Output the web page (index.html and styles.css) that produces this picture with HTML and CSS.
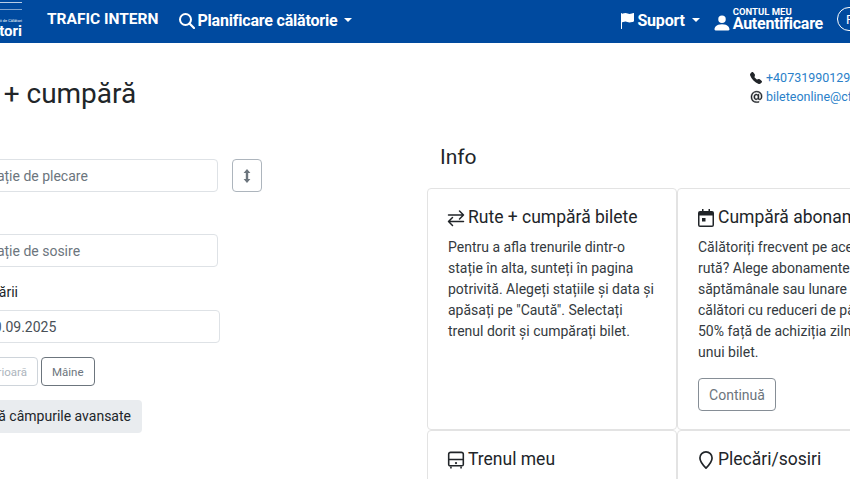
FILE: index.html
```html
<!DOCTYPE html>
<html lang="ro">
<head>
<meta charset="utf-8">
<title>Rute + cumpără</title>
<link rel="stylesheet" href="styles.css">
</head>
<body>
<nav class="nav">
  <div class="logo">
    <span class="logo-lines"></span>
    <span class="logo-small">Informații de Călători</span>
    <span class="logo-big">Călători</span>
  </div>
  <span class="nav-trafic">TRAFIC INTERN</span>
  <span class="nav-item nav-plan">
    <svg viewBox="0 0 16 16" width="16" height="16"><circle cx="6.500" cy="6.500" r="5.500" fill="none" stroke="currentColor" stroke-width="2"/><path d="M10.500 10.500l4.500 4.500" fill="none" stroke="currentColor" stroke-width="2.200" stroke-linecap="round"/></svg>
    Planificare călătorie<span class="caret"></span>
  </span>
  <span class="nav-spacer"></span>
  <span class="nav-item nav-sup">
    <svg viewBox="0 0 16 16" width="16" height="16"><path fill="currentColor" d="M14.778.085A.5.5 0 0 1 15 .5V8a.5.5 0 0 1-.314.464L14.5 8l.186.464-.003.001-.006.003-.023.009a12 12 0 0 1-.397.15c-.264.095-.631.223-1.047.35-.816.252-1.879.523-2.710.523-.847 0-1.548-.28-2.158-.525l-.028-.01C7.680 8.710 7.140 8.500 6.500 8.500c-.7 0-1.638.23-2.437.477A20 20 0 0 0 3 9.342V15.500a.5.5 0 0 1-1 0V.5a.5.5 0 0 1 1 0v.282c.226-.079.496-.17.79-.26C4.606.272 5.670 0 6.500 0c.84 0 1.524.277 2.121.519l.043.018C9.286.788 9.828 1 10.500 1c.7 0 1.638-.23 2.437-.477a20 20 0 0 0 1.349-.476l.019-.007.004-.002h.001"/></svg>
    Suport<span class="caret"></span>
  </span>
  <span class="nav-user">
    <svg class="user-ic" viewBox="0 0 16 16" width="20" height="20"><path fill="currentColor" d="M3 14s-1 0-1-1 1-4 6-4 6 3 6 4-1 1-1 1zm5-6a3 3 0 1 0 0-6 3 3 0 0 0 0 6"/></svg>
    <span class="nav-user-text"><span class="nav-user-top">CONTUL MEU</span><span class="nav-user-main">Autentificare</span></span>
  </span>
  <span class="nav-lang">RO</span>
</nav>
<header class="head">
  <h1 class="title">Rute + cumpără</h1>
  <div class="contact">
    <div class="contact-row">
      <svg viewBox="0 0 16 16" width="12" height="12"><path fill="currentColor" fill-rule="evenodd" d="M1.885.511a1.745 1.745 0 0 1 2.610.163L6.290 2.980c.329.423.445.974.315 1.494l-.547 2.190a.68.68 0 0 0 .178.643l2.457 2.457a.68.68 0 0 0 .644.178l2.189-.547a1.750 1.750 0 0 1 1.494.315l2.306 1.794c.829.645.905 1.870.163 2.611l-1.034 1.034c-.74.74-1.846 1.065-2.877.702a18.600 18.600 0 0 1-7.010-4.420 18.600 18.600 0 0 1-4.420-7.009c-.362-1.030-.037-2.137.703-2.877z"/></svg>
      <a class="contact-link">+40731990129</a>
    </div>
    <div class="contact-row">
      <svg class="at-ic" viewBox="0 0 16 16" width="16" height="16"><path fill="currentColor" stroke="currentColor" stroke-width=".5" d="M13.106 7.222c0-2.967-2.249-5.032-5.482-5.032-3.350 0-5.646 2.318-5.646 5.702 0 3.493 2.235 5.708 5.762 5.708.862 0 1.689-.123 2.304-.335v-.862c-.43.199-1.354.328-2.290.328-2.926 0-4.813-1.880-4.813-4.798 0-2.844 1.921-4.881 4.594-4.881 2.735 0 4.608 1.688 4.608 4.156 0 1.682-.554 2.769-1.416 2.769-.492 0-.772-.28-.772-.76V5.206H8.923v.834h-.11c-.266-.595-.881-.964-1.600-.964-1.400 0-2.378 1.162-2.378 2.823 0 1.737.957 2.906 2.379 2.906.8 0 1.415-.39 1.709-1.087h.11c.081.67.703 1.148 1.503 1.148 1.572 0 2.570-1.415 2.570-3.643zm-7.177.704c0-1.197.54-1.907 1.456-1.907.93 0 1.524.738 1.524 1.907S8.308 9.840 7.371 9.840c-.895 0-1.442-.725-1.442-1.914"/></svg>
      <a class="contact-link">bileteonline@cfrcalatori.ro</a>
    </div>
  </div>
</header>
<main class="main">
  <form class="form">
    <div class="from-row">
      <input class="field field-station" placeholder="Stație de plecare">
      <button type="button" class="swap" aria-label="Inversează">
        <svg viewBox="0 0 16 16" width="16" height="16"><path fill="currentColor" d="M8 1 4.600 5h2.200v6H4.600L8 15l3.400-4H9.200V5h2.200z"/></svg>
      </button>
    </div>
    <input class="field field-station field-to" placeholder="Stație de sosire">
    <label class="date-label">Data plecării</label>
    <input class="field field-date" value="10.09.2025">
    <div class="day-btns">
      <button type="button" class="btn-day btn-muted">Anterioară</button>
      <button type="button" class="btn-day">Mâine</button>
    </div>
    <button type="button" class="btn-adv">Afișează câmpurile avansate</button>
  </form>
  <section class="info">
    <h2 class="info-title">Info</h2>
    <div class="cards">
      <article class="card">
        <h3 class="card-title">
          <svg viewBox="0 0 18 18" width="18" height="18"><path fill="none" stroke="currentColor" stroke-width="1.500" stroke-linecap="round" stroke-linejoin="round" d="M1.500 6h15M12.500 2l4 4-4 4M16.500 12.500h-15M5.500 8.500l-4 4 4 4"/></svg>
          Rute + cumpără bilete
        </h3>
        <p class="card-text">Pentru a afla trenurile dintr-o stație în alta, sunteți în pagina potrivită. Alegeți stațiile și data și apăsați pe "Caută". Selectați trenul dorit și cumpărați bilet.</p>
      </article>
      <article class="card">
        <h3 class="card-title">
          <svg viewBox="0 0 18 18" width="18" height="18"><path fill="currentColor" d="M5 0h1.500v2h5V0H13v2h2a2 2 0 0 1 2 2v12a2 2 0 0 1-2 2H3a2 2 0 0 1-2-2V4a2 2 0 0 1 2-2h2zM2.500 6.500V16a.5.5 0 0 0 .5.5h12a.5.5 0 0 0 .5-.5V6.500zM5 9h3.500v3.500H5z"/></svg>
          Cumpără abonament
        </h3>
        <p class="card-text">Călătoriți frecvent pe aceeași rută? Alege abonamente săptămânale sau lunare și călători cu reduceri de până la 50% față de achiziția zilnică a unui bilet.</p>
        <button type="button" class="btn-cont">Continuă</button>
      </article>
      <article class="card">
        <h3 class="card-title">
          <svg viewBox="0 0 16 16" width="18" height="18"><path fill="none" stroke="currentColor" stroke-width="1.400" d="M3.200 1.200h9.600a1.700 1.700 0 0 1 1.700 1.700v9a1.200 1.200 0 0 1-1.200 1.200H2.700a1.200 1.200 0 0 1-1.200-1.200v-9a1.700 1.700 0 0 1 1.700-1.700zM1.500 7.500h13M3.500 14v1.500M12.500 14v1.500"/><circle cx="8" cy="10.700" r="1" fill="currentColor"/></svg>
          Trenul meu
        </h3>
      </article>
      <article class="card">
        <h3 class="card-title">
          <svg viewBox="0 0 16 16" width="18" height="18"><path fill="none" stroke="currentColor" stroke-width="1.500" d="M8 15.200S2.600 9.800 2.600 6.200a5.400 5.400 0 0 1 10.800 0C13.400 9.800 8 15.200 8 15.200z"/></svg>
          Plecări/sosiri
        </h3>
      </article>
    </div>
  </section>
</main>
</body>
</html>
```
FILE: styles.css
```css
* { box-sizing: border-box; }
html, body { margin: 0; height: 479px; overflow: hidden; background: #fff; }
body { width: 850px; font-family: Roboto, "Liberation Sans", sans-serif; color: #212529; }
.nav { height: 43px; background: #004a9f; color: #fff; display: flex; align-items: center; white-space: nowrap; font-weight: 700; }
.logo { width: 47px; height: 43px; flex: none; display: flex; flex-direction: column; align-items: flex-end; padding-right: 25px; }
.logo-lines { width: 22px; height: 8px; margin-top: 2px; flex: none; border-top: 1px solid #b8cde6; border-bottom: 1px solid #7fa4d0; }
.logo-small { font-size: 4px; font-weight: 400; margin-top: 8px; line-height: 5px; }
.logo-big { font-size: 15px; line-height: 17px; }
.nav-trafic { font-size: 15.500px; margin-right: 21px; margin-top: -5px; }
.nav-item { font-size: 16px; display: flex; align-items: center; letter-spacing: -0.2px; margin-top: -2px; }
.nav-plan svg { margin-right: 2px; }
.nav-sup svg { margin-right: 2px; }
.caret { width: 0; height: 0; margin-left: 7px; margin-top: -2px; border-top: 4px solid #fff; border-left: 4.500px solid transparent; border-right: 4.500px solid transparent; }
.nav-spacer { flex: 1; }
.nav-user { display: flex; align-items: center; margin-left: 12px; gap: 1px; }
.user-ic { margin-top: 2px; }
.nav-user-text { display: flex; flex-direction: column; margin-top: -5px; }
.nav-user-top { font-size: 9.500px; line-height: 10px; }
.nav-user-main { font-size: 16px; line-height: 14px; letter-spacing: -0.25px; }
.nav-lang { width: 40px; height: 24px; margin-left: 14px; margin-right: -27px; flex: none; border: 1.500px solid #fff; border-radius: 12px; font-size: 13px; font-weight: 400; display: flex; align-items: center; padding-left: 8px; margin-top: -5px; }
.head { height: 102px; display: flex; justify-content: space-between; white-space: nowrap; }
.title { margin: 34px 0 0 -60px; font-size: 28px; font-weight: 400; line-height: 34px; }
.contact { width: 100px; margin-top: 25px; font-size: 12.500px; line-height: 19px; flex: none; overflow: hidden; }
.contact-row { display: flex; align-items: center; gap: 4px; }
.contact-row svg { flex: none; }
.at-ic { margin-left: -1px; margin-right: -3px; }
.contact-link { color: #2a7fc9; }
.main { display: flex; }
.form { width: 537px; flex: none; margin-left: -110px; padding-top: 14px; display: flex; flex-direction: column; align-items: flex-start; }
.from-row { display: flex; align-items: center; gap: 14px; }
.field { height: 33px; border: 1px solid #dee2e6; border-radius: 4px; padding: 0 12px; font: 14px/20px Roboto, sans-serif; color: #495057; background: #fff; display: block; }
.field::placeholder { color: #6c757d; opacity: 1; }
.field-station { width: 328px; padding-left: 93px; }
.field-to { margin-top: 42px; }
.date-label { margin-top: 17px; height: 26px; font-size: 14px; line-height: 17px; width: 128px; text-align: right; white-space: nowrap; }
.field-date { width: 330px; padding-left: 95px; }
.swap { width: 30px; height: 33px; padding: 0; border: 1px solid #adb5bd; border-radius: 4px; background: #fff; color: #6c757d; display: flex; align-items: center; justify-content: center; }
.day-btns { display: flex; gap: 3px; margin-top: 14px; margin-left: 70px; }
.btn-day { height: 29px; padding: 0 10px; border: 1px solid #6c757d; border-radius: 4px; background: #fff; color: #6c757d; font: 11.500px Roboto, sans-serif; }
.btn-muted { border-color: #ced4da; color: #adb5bd; width: 78px; white-space: nowrap; overflow: hidden; text-align: right; }
.btn-adv { height: 33px; width: 252px; margin-top: 14px; border: 0; border-radius: 4px; background: #e9ecef; color: #212529; font: 14px Roboto, sans-serif; text-align: right; padding: 0 11px 2px; white-space: nowrap; }
.info { flex: none; width: 500px; }
.info-title { margin: 0 0 0 13px; font-size: 21px; font-weight: 400; line-height: 25px; height: 43px; }
.cards { display: grid; grid-template-columns: 250px 250px; grid-auto-rows: 242px; }
.card { border: 1px solid #e3e3e3; border-radius: 4px; padding: 17px 20px; }
.card-title { margin: 0 0 8px; font-size: 17.500px; font-weight: 400; line-height: 23px; display: flex; align-items: center; gap: 3px; white-space: nowrap; }
.card-title svg { margin-left: -1px; flex: none; }
.card-text { margin: 0 0 15px; font-size: 14px; line-height: 21px; color: #343a40; width: 212px; }
.btn-cont { height: 33px; width: 78px; border: 1px solid #868e96; border-radius: 4px; background: #fff; color: #6c757d; font: 14px Roboto, sans-serif; padding: 0; }
```
